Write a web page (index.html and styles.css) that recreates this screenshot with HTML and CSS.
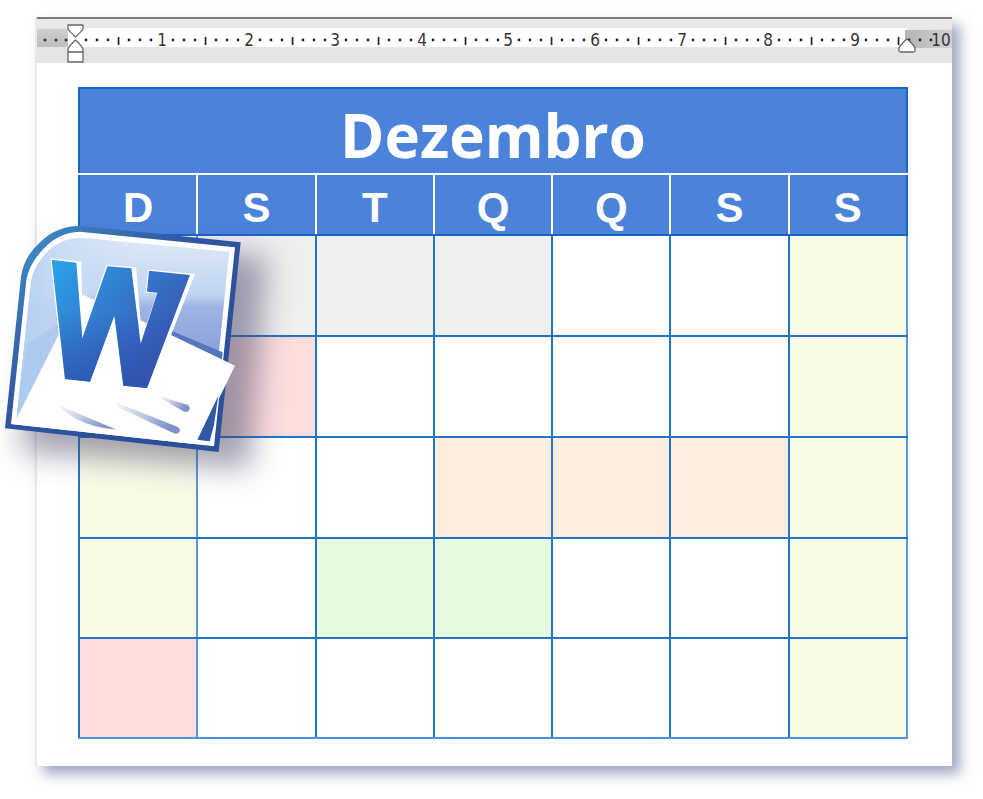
FILE: index.html
```html
<!DOCTYPE html>
<html lang="pt">
<head>
<meta charset="utf-8">
<meta name="viewport" content="width=device-width, initial-scale=1">
<title>Dezembro</title>
<link rel="stylesheet" href="styles.css">
</head>
<body>
<main class="sheet">
  <svg class="ruler" viewBox="0 0 915 46" role="img" aria-label="Régua">
    <defs>
      <linearGradient id="margin" x1="0" x2="0" y1="0" y2="1">
        <stop offset="0" stop-color="#cfcfcf"/>
        <stop offset="1" stop-color="#bdbdbd"/>
      </linearGradient>
      <linearGradient id="margin-end" x1="0" x2="1" y1="0" y2="0">
        <stop offset="0" stop-color="#b4b4b4"/>
        <stop offset="1" stop-color="#d2d2d2"/>
      </linearGradient>
      <g id="unit" fill="#222">
        <circle cx="11" cy="23" r="1.4"/><circle cx="22" cy="23" r="1.4"/><circle cx="33" cy="23" r="1.4"/>
        <rect x="42.700" y="20" width="1.700" height="8"/>
        <circle cx="54" cy="23" r="1.4"/><circle cx="65" cy="23" r="1.4"/><circle cx="76" cy="23" r="1.4"/>
      </g>
    </defs>
    <rect width="915" height="46" fill="#e5e5e5"/>
    <rect width="915" height="11" fill="#ede8e8"/>
    <rect width="915" height="2" fill="#7c7a7b"/>
    <rect x="31" y="11" width="839" height="19" fill="#fff"/>
    <rect y="12" width="31" height="18" fill="url(#margin)"/>
    <rect x="868" y="13" width="47" height="18" fill="url(#margin-end)"/>
    <g fill="#333"><circle cx="8" cy="23" r="1.500"/><circle cx="19" cy="23" r="1.500"/><circle cx="29" cy="23" r="1.500"/></g>
    <use href="#unit" x="38"/><use href="#unit" x="125"/><use href="#unit" x="212"/>
    <use href="#unit" x="298"/><use href="#unit" x="385"/><use href="#unit" x="471"/>
    <use href="#unit" x="558"/><use href="#unit" x="645"/><use href="#unit" x="731"/>
    <use href="#unit" x="818"/>
    <g class="numbers">
      <text x="125" y="29">1</text><text x="212" y="29">2</text><text x="298" y="29">3</text>
      <text x="385" y="29">4</text><text x="471" y="29">5</text><text x="558" y="29">6</text>
      <text x="645" y="29">7</text><text x="731" y="29">8</text><text x="818" y="29">9</text>
      <text x="904" y="29">10</text>
    </g>
    <g fill="#fff" stroke="#666" stroke-width="1.300" stroke-linejoin="round">
      <path d="M31 8H46V12Q44 15 38.500 20Q33 15 31 12Z"/>
      <path d="M38.500 23Q44 28 46 32V45H31V32Q33 28 38.500 23ZM31 35H46"/>
      <path d="M870 22Q876 27 878 31V34Q878 35 876 35H864Q862 35 862 34V31Q864 27 870 22Z"/>
    </g>
  </svg>

  <table class="calendar">
    <thead>
      <tr class="month"><th colspan="7" scope="colgroup">Dezembro</th></tr>
      <tr class="weekdays">
        <th scope="col">D</th><th scope="col">S</th><th scope="col">T</th><th scope="col">Q</th><th scope="col">Q</th><th scope="col">S</th><th scope="col">S</th>
      </tr>
    </thead>
    <tbody>
      <tr><td class="outside"></td><td class="outside"></td><td class="outside"></td><td class="outside"></td><td></td><td></td><td class="weekend"></td></tr>
      <tr><td class="weekend"></td><td class="holiday"></td><td></td><td></td><td></td><td></td><td class="weekend"></td></tr>
      <tr><td class="weekend"></td><td></td><td></td><td class="orange"></td><td class="orange"></td><td class="orange"></td><td class="weekend"></td></tr>
      <tr><td class="weekend"></td><td></td><td class="green"></td><td class="green"></td><td></td><td></td><td class="weekend"></td></tr>
      <tr><td class="holiday"></td><td></td><td></td><td></td><td></td><td></td><td class="weekend"></td></tr>
    </tbody>
  </table>
</main>

<svg class="badge" viewBox="0 0 960 870" role="img" aria-label="Word">
  <defs>
    <linearGradient id="frame" x1="0" y1="0" x2=".7" y2=".7">
      <stop offset="0" stop-color="#45a0d8"/><stop offset=".25" stop-color="#3a78b8"/><stop offset=".6" stop-color="#31569f"/><stop offset="1" stop-color="#2c4f9c"/>
    </linearGradient>
    <linearGradient id="sky" x1="0" y1="0" x2="0" y2="1">
      <stop offset="0" stop-color="#dfe9f8"/><stop offset=".28" stop-color="#bfd5f1"/><stop offset=".34" stop-color="#9fb3e3"/><stop offset=".6" stop-color="#8a9fda"/><stop offset="1" stop-color="#a9c6ec"/>
    </linearGradient>
    <linearGradient id="glass" x1="0" y1="0" x2="1" y2="0">
      <stop offset="0" stop-color="#b5d1f2"/><stop offset=".4" stop-color="#c9dcf5" stop-opacity=".8"/><stop offset="1" stop-color="#c9dcf5" stop-opacity="0"/>
    </linearGradient>
    <linearGradient id="letter" gradientUnits="userSpaceOnUse" x1="150" y1="180" x2="440" y2="430">
      <stop offset="0" stop-color="#2b9fe8"/><stop offset=".45" stop-color="#3280cf"/><stop offset="1" stop-color="#385bb7"/>
    </linearGradient>
    <linearGradient id="depth" gradientUnits="userSpaceOnUse" x1="0" y1="300" x2="0" y2="510">
      <stop offset="0" stop-color="#2b56b0" stop-opacity="0"/><stop offset="1" stop-color="#2b52ae" stop-opacity=".7"/>
    </linearGradient>
    <linearGradient id="line" x1="0" y1="0" x2="1" y2=".4">
      <stop offset="0" stop-color="#fff"/><stop offset=".5" stop-color="#c5cee9"/><stop offset="1" stop-color="#7e90c5"/>
    </linearGradient>
    <filter id="soft" x="-40%" y="-40%" width="180%" height="180%"><feGaussianBlur stdDeviation="44"/></filter>
  </defs>
  <path d="M160 110L800 120L750 760L60 710Z" fill="#44446a" opacity=".5" filter="url(#soft)"/>
  <path d="M240 32L722 82L656 711L15 640L63 185Q72 125 118 84Q165 34 240 32Z" fill="url(#frame)"/>
  <path d="M240 50L705 97L642 694L33 627L79 195Q88 145 130 102Q175 52 240 50Z" fill="#fff"/>
  <path d="M240 68L688 110L629 679L50 610L93 200Q101 152 139 114Q180 70 240 68Z" fill="url(#sky)"/>
  <path d="M93 200Q101 152 139 114Q180 70 240 68L420 85L250 250L180 350L50 610Z" fill="url(#glass)"/>
  <path d="M84 385L178 325L180 362L50 610L66 470Z" fill="#9dbfea" opacity=".4"/>
  <path d="M515 348L668 412L665 440L512 368Z" fill="#5575bd"/>
  <path d="M250 240L420 315L705 452L590 688L33 627L50 610L180 350Z" fill="#fff"/>
  <path d="M629 679L592 674L655 542L642 630Z" fill="#3158a5"/>
  <path d="M155 134L240 143L246 370L322 154L405 160L424 384L475 232L441 230L447 167L580 180L447 519L370 512L343 303L275 500L195 492Z" fill="#fff" stroke="#fff" stroke-width="7"/>
  <path d="M155 134L229 143L247 370L322 154L394 160L422 386L472 233L441 230L447 167L570 180L441 519L370 512L343 303L270 500L195 492Z" fill="url(#letter)"/>
  <path d="M155 134L229 143L247 370L322 154L394 160L422 386L472 233L441 230L447 167L570 180L441 519L370 512L343 303L270 500L195 492Z" fill="url(#depth)"/>
  <path d="M170 568L265 608L350 644Q280 640 225 610Q190 590 170 568Z" fill="url(#line)"/>
  <path d="M338 558L532 635Q544 642 538 651Q532 659 520 654L360 580Z" fill="url(#line)"/>
  <path d="M475 542L562 569Q573 576 568 585Q562 594 550 589L500 560Z" fill="url(#line)"/>
</svg>
</body>
</html>
```
FILE: styles.css
```css
* {
  box-sizing: border-box;
}

body {
  position: relative;
  margin: 0;
  padding: 17px 31px 33px 35px;
  background: #fff;
}

.sheet {
  border-left: 2px solid #e8e8e8;
  padding-bottom: 27px;
  background: #fff;
  box-shadow: 8px 8px 12px rgba(65, 85, 140, 0.5);
}

.ruler {
  display: block;
  width: 100%;
  height: auto;
}

.numbers {
  fill: #333;
  font: 17px "DejaVu Sans Condensed", "Noto Sans", sans-serif;
  text-anchor: middle;
}

.calendar {
  width: calc(100% - 85px);
  margin: 24px 43px 0 41px;
  border-collapse: collapse;
  table-layout: fixed;
}

.calendar th {
  padding: 0;
  border: 2px solid #1565c8;
  background: #4b82da;
  color: #fff;
  font-weight: bold;
}

.calendar .month th {
  height: 86px;
  padding-top: 8px;
  border-bottom-color: #fff;
  font-family: "Open Sans", "Noto Sans", sans-serif;
  font-size: 60px;
  line-height: 72px;
}

.calendar .weekdays th {
  height: 61px;
  padding-top: 7px;
  font-family: "Liberation Sans", sans-serif;
  font-size: 42px;
  line-height: 48px;
}

.calendar .weekdays th:not(:last-child) {
  border-right-color: #fff;
}

.calendar td {
  height: 101px;
  padding: 0;
  border: 2px solid #2474c6;
}

.calendar tr:nth-child(n + 4) td {
  height: 100px;
}

.calendar td:first-child,
.calendar td:last-child {
  border-right-color: #5598df;
}

.calendar tbody tr:last-child td {
  border-bottom-color: #4b92dc;
}

.outside {
  background: #efefef;
}

.weekend {
  background: #fafbe6;
}

.holiday {
  background: #fddedd;
}

.orange {
  background: #ffeddf;
}

.green {
  background: #e6fbdf;
}

.badge {
  position: absolute;
  top: 215px;
  left: 0;
  width: 320px;
  height: 290px;
}
```
